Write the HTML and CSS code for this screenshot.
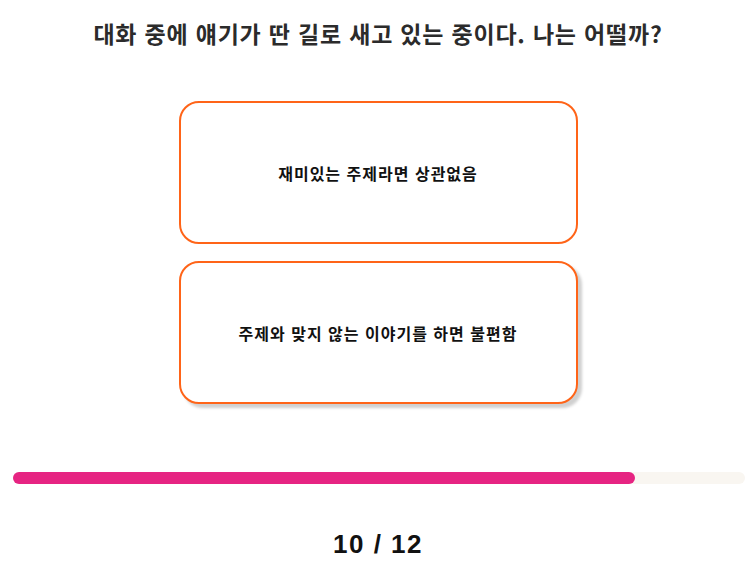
FILE: index.html
```html
<!DOCTYPE html>
<html lang="ko">
<head>
    <meta charset="UTF-8">
    <meta name="viewport" content="width=device-width, initial-scale=1.0">
    <title>테스트</title>
    <link rel="stylesheet" href="styles.css">
</head>
<body>
    <div class="quiz">
        <h1 class="question">대화 중에 얘기가 딴 길로 새고 있는 중이다. 나는 어떨까?</h1>
        <div class="answers">
            <div class="answer">재미있는 주제라면 상관없음</div>
            <div class="answer shadow">주제와 맞지 않는 이야기를 하면 불편함</div>
        </div>
        <div class="progress">
            <div class="progress-fill" style="width: 85%"></div>
        </div>
        <div class="counter">10 / 12</div>
    </div>
</body>
</html>
```

FILE: styles.css
```css
body {
    font-family: 'Noto Sans CJK KR', 'Noto Sans', sans-serif;
    background-color: #fff;
    margin: 0;
    padding: 0;
}
.quiz {
    display: flex;
    flex-direction: column;
    align-items: center;
}
.question {
    font-size: 23px;
    font-weight: bold;
    letter-spacing: 0.8px;
    color: #2b2b2b;
    margin: 17px 0 0;
    line-height: 32px;
    text-align: center;
}
.answers {
    display: flex;
    flex-direction: column;
    gap: 17px;
    margin-top: 52px;
}
.answer {
    width: 395px;
    height: 139px;
    border: 2px solid #ff6418;
    border-radius: 20px;
    display: flex;
    align-items: center;
    justify-content: center;
    font-size: 16px;
    font-weight: bold;
    letter-spacing: 1px;
    color: #111;
    background-color: #fff;
}
.shadow {
    box-shadow: 4px 4px 3px #d0d0d0;
}
.progress {
    align-self: stretch;
    margin: 68px 11px 0 13px;
    height: 12px;
    border-radius: 6px;
    background-color: #f9f6f1;
}
.progress-fill {
    height: 100%;
    border-radius: 6px;
    background-color: #e62482;
}
.counter {
    margin-top: 45px;
    font-family: 'Liberation Sans', Arial, sans-serif;
    font-size: 26px;
    font-weight: bold;
    letter-spacing: 1.5px;
    color: #111;
}
```
